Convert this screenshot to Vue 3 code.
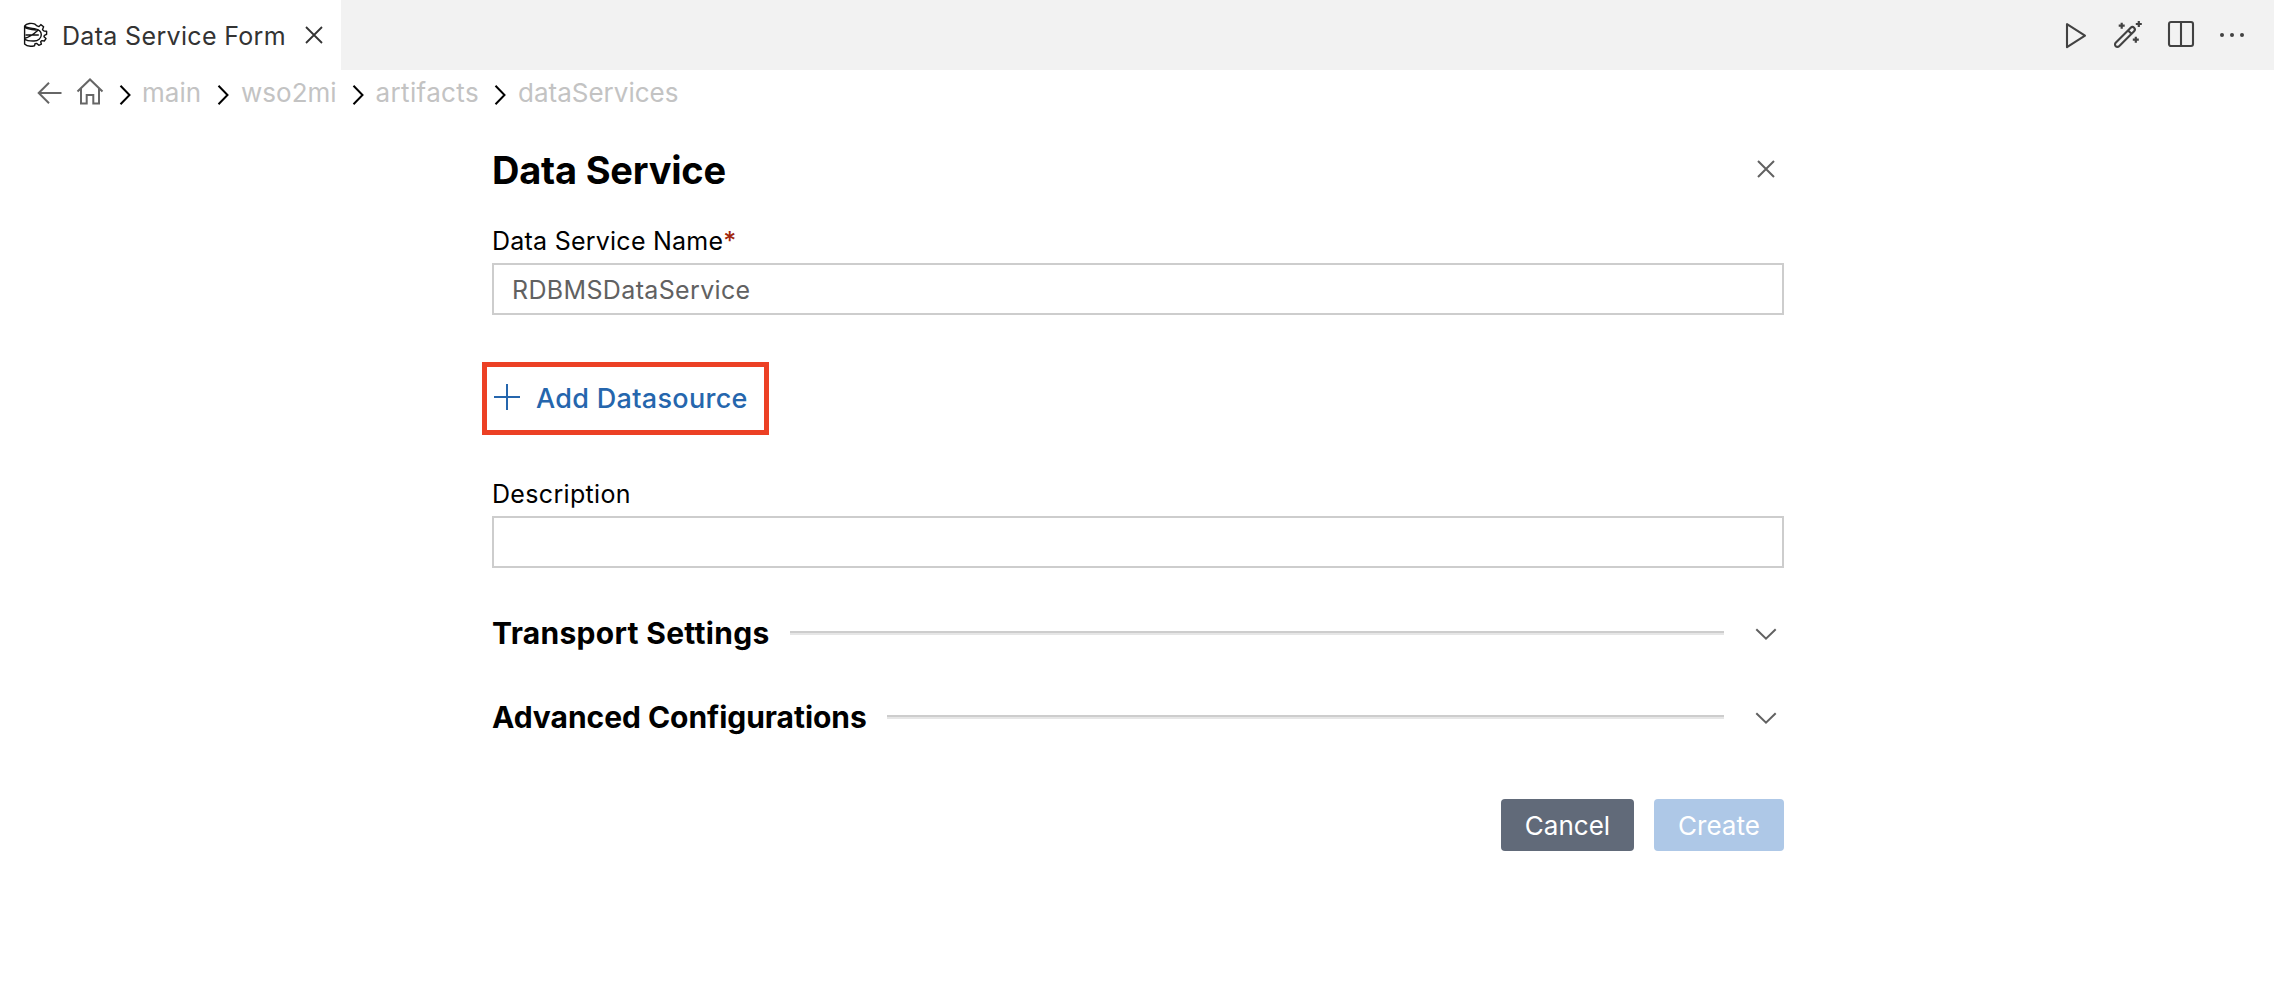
<script setup>
const crumbs = ['main', 'wso2mi', 'artifacts', 'dataServices']
const sections = [
  { title: 'Transport Settings', cls: 'transport' },
  { title: 'Advanced Configurations', cls: 'advanced' },
]
</script>

<template>
  <div class="page">
    <header class="tabs">
      <div class="tab">
        <svg class="tab-icon" width="26" height="26" viewBox="0 0 26 26">
          <path d="M2.600 4C4.500 1.200 10 .8 13 2.200L14.500 3.600L17 4.600L18.800 2.600L21.600 4.800L20.500 7.800L22 9L24.600 9.200V12.300L22.400 13.300L22 14.800L24 16.600L22.300 19L19.700 18.600L18.700 19.800L19.400 22.200L16.800 23.300L14.800 21.400L13 21.700L12.600 23.700C9 24.500 4.500 24.200 2.600 22V4C4.500 6.400 9.500 6.200 12.500 6.600C16.500 7.300 19.300 9.800 19.300 12.800C19.300 16.400 16 18.800 12 19C8 19.100 4.500 18.600 2.600 17" />
          <path d="M2.600 16.200C7 15.500 12.500 11.500 16.600 7.800M3.500 13H16.800M2.600 5C4 6.500 7 7.500 14.500 8" />
        </svg>
        <span class="tab-title">Data Service Form</span>
        <svg class="tab-close" width="18" height="18" viewBox="0 0 18 18"><path d="M1 1L17 17M17 1L1 17" /></svg>
      </div>
      <div class="actions">
        <svg class="play" width="28" height="28" viewBox="0 0 28 28"><path d="M5 3.200V26.200L23 14.700Z" /></svg>
        <svg class="wand" width="28" height="28" viewBox="0 0 28 28">
          <path d="M1.700 21.800L16.700 6.800A2.350 2.350 0 0 1 20.100 10.200L5.100 25.200A2.350 2.350 0 0 1 1.700 21.800ZM14.100 9.400L17.500 12.800" />
          <path class="spark" d="M7.700 1.700V7.700M4.700 4.700H10.700M24.800 0V6M21.800 3H27.800M21.800 15.700V21.700M18.800 18.700H24.800" />
        </svg>
        <svg class="split" width="28" height="28" viewBox="0 0 28 28"><rect x="2" y="1" width="24" height="24" rx="2" /><path d="M14 1V25" /></svg>
        <svg width="28" height="28" viewBox="0 0 28 28"><g class="dots"><circle cx="4" cy="14" r="2" /><circle cx="14" cy="14" r="2" /><circle cx="24" cy="14" r="2" /></g></svg>
      </div>
    </header>

    <nav class="crumbs">
      <svg class="back" width="26" height="24" viewBox="0 0 26 24"><path d="M24.500 12H2M12 1.700L1.700 12L12 22.300" /></svg>
      <svg class="home" width="28" height="27" viewBox="0 0 28 27"><path d="M1.500 13.500L14 1.500L26.500 13.500M5 10.500V25.500H10.700V17H17.300V25.500H23V10.500" /></svg>
      <template v-for="c in crumbs" :key="c">
        <svg class="sep" width="12" height="22" viewBox="0 0 12 22"><path d="M1.500 1.700L10.500 11L1.500 20.300" /></svg>
        <span class="crumb" :class="c">{{ c }}</span>
      </template>
    </nav>

    <main class="form">
      <div class="title-row">
        <h1>Data Service</h1>
        <svg class="form-close" width="18" height="18" viewBox="0 0 18 18"><path d="M1 1L17 17M17 1L1 17" /></svg>
      </div>
      <label class="label name">Data Service Name<span class="req">*</span></label>
      <div class="field"><span>RDBMSDataService</span></div>
      <div class="add">
        <svg width="26" height="26" viewBox="0 0 26 26"><path d="M13 0V26M0 13H26" /></svg>
        <span>Add Datasource</span>
      </div>
      <label class="label desc">Description</label>
      <div class="field"></div>
      <div class="sections">
        <div v-for="s in sections" :key="s.title" class="section">
          <h2 :class="s.cls">{{ s.title }}</h2>
          <div class="rule"></div>
          <svg width="22" height="12" viewBox="0 0 22 12"><path d="M1.300 1.200L11 10.700L20.700 1.200" /></svg>
        </div>
      </div>
      <div class="buttons">
        <button class="cancel">Cancel</button>
        <button class="create">Create</button>
      </div>
    </main>
  </div>
</template>

<style>
body { background: #fff; }
</style>

<style scoped>
.page { width: 2274px; height: 990px; overflow: hidden; background: #fff; font-family: Inter, "Liberation Sans", sans-serif; font-size: 25px; color: #000; white-space: nowrap; }
svg { fill: none; stroke: #424242; stroke-width: 2; flex: none; display: block; overflow: visible; }
.tabs { height: 70px; background: #f2f2f2; display: flex; justify-content: space-between; }
.tab { width: 341px; height: 70px; box-sizing: border-box; background: #fff; display: flex; align-items: center; padding-left: 22px; }
.tab-icon { stroke: #111; stroke-width: 1.4; stroke-linejoin: round; }
.tab-title { margin-left: 14px; width: 222px; line-height: 30px; margin-top: 2px; color: #333; letter-spacing: 0.33px; }
.tab-close { margin-left: 21px; stroke: #333; stroke-width: 1.8; }
.actions { display: flex; align-items: center; padding-right: 28px; }
.actions svg { stroke-width: 2.100; stroke-linejoin: round; }
.play { margin-right: 24px; }
.wand { margin-right: 25px; }
.split { margin-right: 23px; }
.spark { stroke-width: 2.200; }
.dots { fill: #424242; stroke: none; }

.crumbs { display: flex; align-items: center; height: 46px; padding-left: 37px; font-size: 26px; color: #c3c3c3; }
.crumbs svg { stroke: #666; }
.home { margin-left: 13px; margin-top: -3px; }
.crumbs .sep { stroke: #000; margin-top: 3px; margin-left: 15px; margin-right: 12px; }
.crumb { line-height: 32px; }
.main { margin-left: -1px; margin-right: 1px; }
.artifacts { letter-spacing: 0.35px; }

.form { width: 1292px; margin-left: 492px; }
.title-row { display: flex; justify-content: space-between; align-items: center; height: 46px; margin-top: 31px; padding-right: 9px; }
h1 { margin: 0; font-size: 38px; line-height: 46px; font-weight: 700; letter-spacing: -0.2px; }
.form-close { stroke: #616161; margin-top: -2px; }
.label { display: block; height: 30px; line-height: 30px; margin-top: 33px; letter-spacing: 0.24px; }
.desc { letter-spacing: 0.33px; }
.req { color: #a1260d; font-weight: 500; }
.field { height: 52px; box-sizing: border-box; border: 2px solid #cdcdcd; margin-top: 7px; padding-left: 18px; line-height: 50px; color: #616161; letter-spacing: 0.35px; }
.add { width: 287px; height: 73px; box-sizing: border-box; border: 5px solid #ec4024; margin: 47px 0 0 -10px; padding-left: 7px; display: flex; align-items: center; font-size: 27px; font-weight: 500; color: #2566ad; letter-spacing: 0.31px; }
.add svg { stroke: #2566ad; margin-top: -3px; }
.add span { margin-left: 16px; line-height: 34px; }
.label.desc { margin-top: 44px; }
.sections { display: flex; flex-direction: column; gap: 48px; margin-top: 47px; }
.section { display: flex; align-items: center; height: 36px; padding-right: 7px; }
h2 { margin: 0; font-size: 30px; line-height: 36px; font-weight: 700; }
.transport { letter-spacing: 0.3px; }
.advanced { letter-spacing: -0.04px; }
.rule { flex: 1; height: 2px; border-bottom: 2px solid #e6e6e6; background: #cdcdcd; background-clip: padding-box; margin: 0 31px 0 20px; }
.section svg { stroke: #616161; margin-top: 2px; }
.buttons { display: flex; justify-content: flex-end; gap: 20px; margin-top: 64px; }
button { height: 52px; border: 0; border-radius: 4px; padding: 2px 0 0; color: #fff; font: 400 26px/50px Inter, "Liberation Sans", sans-serif; }
.cancel { width: 133px; background: #616a79; }
.create { width: 130px; background: #aec8e7; }
</style>
